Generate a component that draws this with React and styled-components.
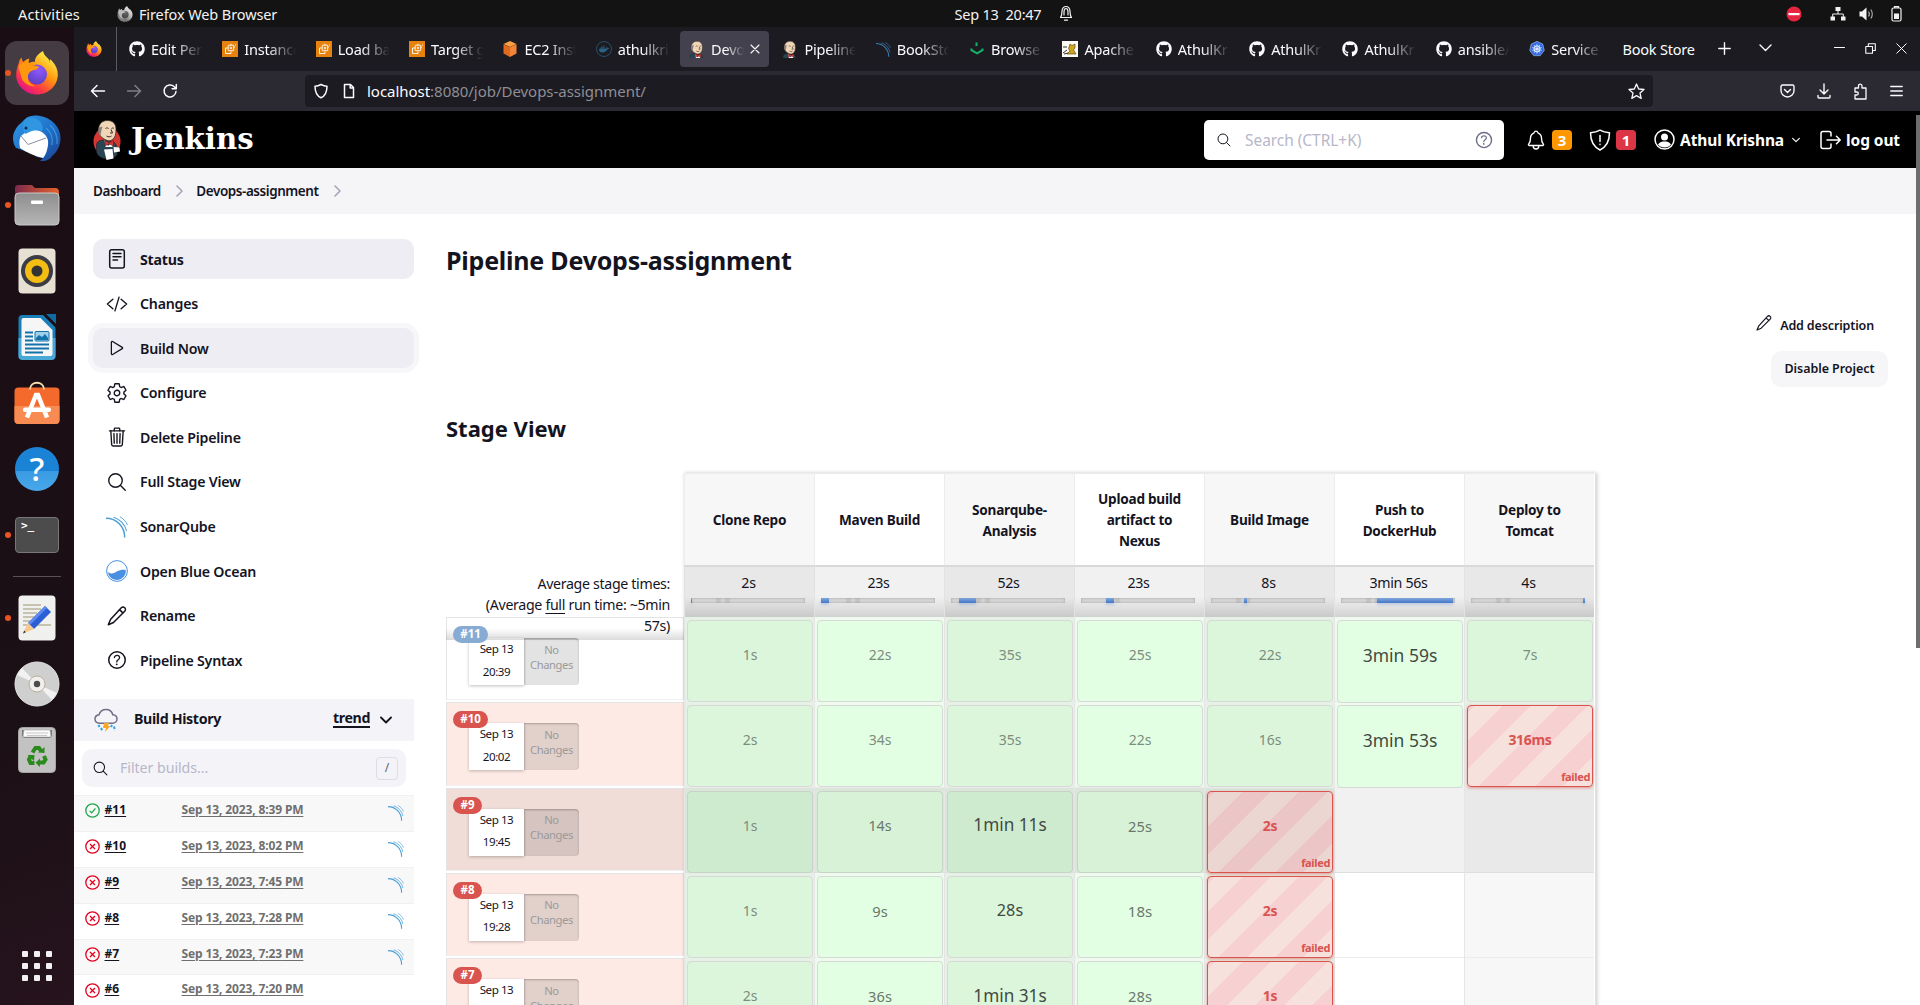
import React from "react";
import styled, { createGlobalStyle, css } from "styled-components";
import { FaGithub, FaDocker } from "react-icons/fa";
import {
  IoCodeSlashOutline, IoPlayOutline, IoSettingsOutline, IoTrashOutline, IoSearchOutline,
  IoHelpCircleOutline, IoNotificationsOutline, IoChevronDown,
} from "react-icons/io5";

const Global = createGlobalStyle`
  * { box-sizing: border-box; }
  body { margin: 0; background: #fff; font-family: "Noto Sans", "Open Sans", sans-serif; overflow: hidden; }
  svg { display: block; flex: none; }
`;

/* ---------- shell ---------- */
const Screen = styled.div`display: flex; flex-direction: column; width: 1920px; height: 1005px; overflow: hidden;`;
const TopBar = styled.header`
  flex: none; height: 27px; background: #131313; color: #f2f2f2; display: grid;
  grid-template-columns: 1fr auto 1fr; align-items: center; font-size: 14.5px; line-height: 26px; white-space: pre;
`;
const TopLeft = styled.div`display: flex; align-items: center; padding-left: 18px; letter-spacing: 0.15px;`;
const AppName = styled.span`display: flex; align-items: center; gap: 6px; margin-left: 37px; letter-spacing: -0.1px;`;
const Clock = styled.div`display: flex; align-items: center; gap: 18px; letter-spacing: -0.25px; padding-left: 108px;`;
const TopRight = styled.div`display: flex; align-items: center; justify-content: flex-end; padding-right: 18px;`;
const NetIcon = styled.svg`margin-left: 28px;`;
const VolIcon = styled.svg`margin-left: 13px;`;
const BatIcon = styled.svg`margin-left: 16px;`;
const Desktop = styled.div`flex: 1; min-height: 0; display: flex;`;

const Dock = styled.nav`
  flex: none; width: 74px; background: linear-gradient(160deg, #1a0d14 0%, #1b1015 70%, #26131d 100%);
  display: flex; flex-direction: column; align-items: center; padding-top: 13px;
`;
const DockItem = styled.div`
  position: relative; width: 74px; height: 66px; display: flex; align-items: center; justify-content: center; flex: none;
`;
const DockTile = styled.div`
  width: 64px; height: 64px; border-radius: 12px; display: flex; align-items: center; justify-content: center;
  background: ${(p) => (p.$active ? "#453b42" : "transparent")};
`;
const DockDot = styled.i`position: absolute; left: 5px; top: 30px; width: 6px; height: 6px; border-radius: 50%; background: #e95420;`;
const DockLine = styled.hr`width: 48px; height: 1px; border: 0; margin: 8px 0; background: #5a5156; flex: none;`;
const AppsGrid = styled.div`
  margin-top: auto; margin-bottom: 24px; display: grid; grid-template-columns: repeat(3, 6px); gap: 6px;
  i { width: 6px; height: 6px; border-radius: 1px; background: #f2f0f1; }
`;

/* ---------- browser ---------- */
const Browser = styled.main`flex: 1; min-width: 0; display: flex; flex-direction: column; background: #fff;`;
const TabStrip = styled.div`flex: none; height: 44px; background: #1c1b22; display: flex; color: #fbfbfe;`;
const PinnedTab = styled.div`width: 43px; border-right: 1px solid #5b5a61; display: flex; align-items: center; justify-content: center; padding-right: 3px;`;
const Tabs = styled.div`display: flex; padding-left: 1px;`;
const Tab = styled.div`
  flex: none; width: ${(p) => (p.$wide ? 95 : 89.35)}px; height: 36px; margin: 4px 2px; padding-left: ${(p) => (p.$wide ? 9 : 9)}px;
  display: flex; align-items: center; gap: 6px; border-radius: 4px; background: ${(p) => (p.$active ? "#42414d" : "transparent")};
`;
const TabTitle = styled.span`
  flex: none; width: ${(p) => p.$w}px; overflow: hidden; white-space: nowrap; font-size: 14.5px; line-height: 22px; letter-spacing: -0.2px;
  ${(p) => !p.$full && css`mask-image: linear-gradient(90deg, #000 45%, transparent 100%);`}
`;
const TabTools = styled.div`flex: 1; display: flex; align-items: center; justify-content: flex-end; gap: 28px; padding-right: 13px; height: 42px;`;
const WindowTools = styled.div`display: flex; align-items: center; gap: 20px; margin-left: 34px;`;
const NavBar = styled.div`flex: none; height: 40px; background: #2b2a33; display: flex; align-items: center; color: #fbfbfe;`;
const NavButtons = styled.div`width: 231px; display: flex; gap: 20px; padding-left: 16px;`;
const UrlField = styled.div`
  width: 1348px; height: 32px; border-radius: 4px; background: #1c1b22; display: flex; align-items: center; padding: 0 8px;
`;
const UrlText = styled.span`font-size: 15px; color: #8f8e95; margin-left: 12.5px; flex: 1; line-height: 20px; letter-spacing: -0.03px; b { color: #fbfbfe; font-weight: 400; }`;
const NavTools = styled.div`flex: 1; display: flex; align-items: center; justify-content: flex-end; gap: 22px; padding-right: 17px;`;
const UrlIcons = styled.div`display: flex; gap: 13.5px; align-items: center;`;

/* ---------- Jenkins header ---------- */
const Page = styled.div`flex: 1; min-height: 0; position: relative; display: flex; flex-direction: column; color: #14141f;`;
const Scrollbar = styled.div`position: absolute; right: 0; top: 4px; width: 4px; height: 533px; background: #6d6d6e; z-index: 3;`;
const JenkinsBar = styled.div`flex: none; height: 57px; background: #000; display: flex; align-items: center; color: #fff; padding: 0 20px 0 19px;`;
const Brand = styled.div`display: flex; align-items: center; gap: 10px; flex: 1;`;
const BrandName = styled.span`font: 700 29.2px/40px "DejaVu Serif", serif; padding-bottom: 2px;`;
const SearchBox = styled.div`
  width: 300px; height: 40px; border-radius: 5px; background: #fff; color: #14141f; display: flex; align-items: center; padding: 0 9px 0 12px;
`;
const Placeholder = styled.span`flex: 1; color: #b7b7c9; font-size: ${(p) => p.$s}px; margin-left: ${(p) => p.$gap}px; letter-spacing: -0.05px; line-height: 20px;`;
const HeaderTools = styled.div`display: flex; align-items: center; margin-left: 21px;`;
const Badge = styled.span`
  width: 20px; height: 20px; margin: 0 ${(p) => p.$after}px 0 5px; border-radius: 4px; background: ${(p) => p.$c}; font-size: 15px; font-weight: 700;
  line-height: 20px; text-align: center;
`;
const HeaderText = styled.span`font-size: 15.5px; font-weight: 700; line-height: 22px; letter-spacing: -0.1px; margin: 0 ${(p) => p.$after || 0}px 0 5px;`;
const LogoutSlot = styled.span`margin-left: 2px;`;
const Crumbs = styled.div`
  flex: none; height: 46px; background: #f5f5f8; display: flex; align-items: center; padding: 0 19px; font-size: 13.5px; font-weight: 600;
  letter-spacing: -0.44px; svg { margin: 0 13.5px 0 15px; }
`;

/* ---------- side panel ---------- */
const Body = styled.div`flex: 1; min-height: 0; display: flex; overflow: hidden;`;
const SidePanel = styled.aside`flex: none; width: 340px; padding-top: 25px;`;
const TaskList = styled.nav`display: flex; flex-direction: column; gap: 4.6px; padding-left: 19px;`;
const Task = styled.a`
  height: 40px; flex: none; border-radius: 10px; padding-left: 12px; display: flex; align-items: center; gap: 12px; font-size: 14.2px;
  font-weight: ${(p) => (p.$on ? 700 : 600)}; letter-spacing: -0.22px;
  background: ${(p) => (p.$on || p.$hover ? "#ededf3" : "transparent")};
  box-shadow: ${(p) => (p.$hover ? "0 0 0 5px #f7f7f9" : "none")};
`;
const TaskIcon = styled.span`width: 23px; display: flex; justify-content: center;`;
const HistoryHead = styled.div`
  height: 42px; margin-top: 18.6px; background: #f3f3f8; display: flex; align-items: center; padding: 0 22px 0 20px; font-size: 14.2px; font-weight: 700;
`;
const HistoryTitle = styled.span`flex: 1; margin-left: 16px; letter-spacing: -0.35px; padding-bottom: 2px;`;
const TrendLink = styled.a`border-bottom: 2px solid #14141f; line-height: 16px; letter-spacing: -0.35px; margin: 0 10px 2px 0;`;
const FilterBox = styled.div`
  margin: 8px; height: 38px; border-radius: 10px; background: #f3f3f8; display: flex; align-items: center; padding: 1px 8px 0 10px;
`;
const Key = styled.kbd`
  width: 22px; height: 23px; border: 1px solid #dddde6; border-radius: 4px; font: 400 12px/20px "Noto Sans", sans-serif; text-align: center; color: #5f5f78;
`;
const BuildRow = styled.div`
  height: 35.9px; border-top: 1px solid #f0f0f0; background: ${(p) => (p.$odd ? "#f8f8f8" : "#fff")};
  display: grid; grid-template-columns: 20px 77px 1fr 26px; padding-left: 10.500px; padding-top: 5px; align-items: start;
`;
const StatusMark = styled.span`padding-top: 2.5px;`;
const BuildLink = styled.a`font-size: 12px; font-weight: 700; line-height: 17px; text-decoration: underline; text-underline-offset: 2px; letter-spacing: 0.05px;`;
const DateLink = styled(BuildLink)`color: #6f6f6f; letter-spacing: -0.13px;`;
const SonarSlot = styled.span`padding-top: 4px;`;

/* ---------- content ---------- */
const Content = styled.section`flex: 1; min-width: 0; padding: 30px 32px 0 32px;`;
const PageTitle = styled.h1`margin: 0; font-size: 25px; line-height: 32px; font-weight: 700; letter-spacing: -0.22px;`;
const Actions = styled.div`display: flex; flex-direction: column; align-items: flex-end; gap: 16px; margin-top: 39px; font-size: 12.5px; font-weight: 600;`;
const AddDescription = styled.a`height: 20px; display: flex; align-items: center; gap: 8px; padding-right: 14px; letter-spacing: -0.14px; svg { margin-bottom: 4px; }`;
const DisableButton = styled.button`
  width: 117px; height: 36px; border: 0; border-radius: 10px; background: #f6f6f9; font: inherit; color: inherit; padding: 0 0 1px; letter-spacing: -0.06px;
`;
const SectionTitle = styled.h2`margin: 25px 0 29px; font-size: 22px; line-height: 32px; font-weight: 700;`;

const StageTable = styled.div`display: flex;`;
const RunColumn = styled.div`flex: none; width: 238px;`;
const Legend = styled.div`
  position: relative; z-index: 1; height: 167px; margin-bottom: -23px; padding: 100px 14px 0 0; text-align: right; font-size: 14.2px; line-height: 21px;
  letter-spacing: -0.33px; background: linear-gradient(transparent 155px, rgba(0,0,0,.14) 167px); u { text-underline-offset: 3px; }
`;
const RunCard = styled.div`
  height: 83.25px; margin-bottom: 2px; width: 238px; padding: 8px 6px 0; border: 1px solid #e4e4e6; border-bottom-color: #f0f0f0;
  background: ${(p) => (p.$hover ? "#f0ddd8" : p.$failed ? "#feeae5" : "#fff")};
`;
const RunBadge = styled.span`
  position: relative; z-index: 2; display: block; width: ${(p) => (p.$long ? 35 : 29)}px; height: 17px; border-radius: 9px; font-size: 11.5px; line-height: 16px; font-weight: 700;
  text-align: center; color: #fff; background: ${(p) => (p.$failed ? "#d9534f" : "#87abd3")};
`;
const RunInfo = styled.div`display: flex; margin: -5px 0 0 16px; font-size: 11.6px; text-align: center;`;
const RunDate = styled.div`
  width: 55px; height: 47px; background: #fff; box-shadow: 0 1px 3px rgba(0,0,0,.25); letter-spacing: -0.45px; line-height: 22.6px;
`;
const NoChanges = styled.div`
  width: 55px; height: 47px; padding-top: 3.5px; color: #9a9a9a; background: rgba(0,0,0,.11); line-height: 15px; border-radius: 0 4px 4px 0; font-size: 11.2px;
  letter-spacing: -0.4px; box-shadow: inset 0 1px 2px rgba(0,0,0,.25);
`;
const Stages = styled.div`
  flex: none; width: 912px; display: grid; grid-template-columns: repeat(7, 130px); grid-template-rows: 92px 52px; grid-auto-rows: 85.25px;
  border-right: 1px solid #e0e0e0; box-shadow: 1px 0 4px rgba(0,0,0,.22);
`;
const StageHead = styled.div`
  display: flex; align-items: center; justify-content: center; text-align: center; padding: 0 18px; font-size: 13.6px; line-height: 21px; font-weight: 700;
  letter-spacing: -0.25px; border-left: 1px solid #ececec; border-top: 1px solid #ececec; background: ${(p) => (p.$odd ? "#f7f7f7" : "#fff")};
`;
const StageAvg = styled.div`
  padding: 5px 8px 0 6px; text-align: center; font-size: 14.2px; line-height: 22px; letter-spacing: -0.3px; border-left: 1px solid #e2e2e2; border-top: 2px solid #d9d9d9;
  background: linear-gradient(${(p) => (p.$odd ? "#e8e8e8, #e8e8e8 30px, #c9c9c9" : "#f1f1f1, #f1f1f1 30px, #d2d2d2")});
`;
const Track = styled.div`
  margin-top: 4px; width: 114px; height: 5px; box-shadow: inset 0 0 3px rgba(0,0,0,.25); padding-left: ${(p) => p.$from}px;
  background: linear-gradient(90deg, transparent 24px, #c8c8c8 26px 29px, transparent 31px, transparent 33px, #c8c8c8 35px 38px, transparent 40px), #d8d8d8;
`;
const Fill = styled.div`height: 5px; width: ${(p) => p.$w}px; background: linear-gradient(#7fa6dc, #4576c8); box-shadow: 0 2px 3px rgba(70,118,200,.25);`;
const Cell = styled.div`
  border-left: 1px solid #e6e6e6; border-bottom: 1px solid ${(p) => (p.$hover ? "#dedede" : "#ebebeb")}; padding: 3px 1px 0 2px;
  background: ${(p) => (p.$state === "empty" ? (p.$odd ? "#f7f7f7" : "#fff") : p.$odd ? "#e6f1e5" : "#eefaee")};
  ${(p) => p.$hover && css`background: ${p.$state === "empty" ? (p.$odd ? "#e9e9e9" : "#f1f1f1") : "#dbe6da"};`}
`;
const CellBox = styled.div`
  position: relative; height: ${(p) => (p.$size > 17.3 ? 83 : 82)}px; width: 126px; border-radius: 4px; padding-top: ${(p) => (p.$size > 16 ? 22.500 : 23)}px; text-align: center; line-height: 22px;
  border: 1px solid ${(p) => (p.$failed ? "#d9534f" : p.$hover ? "#c6d3c6" : "#d6d9d6")};
  font-size: ${(p) => p.$size}px; color: ${(p) => (p.$failed ? "#d9534f" : p.$ink)}; font-weight: ${(p) => (p.$failed ? 700 : 400)};
  letter-spacing: ${(p) => (p.$failed ? -0.3 : 0)}px;
  ${(p) => p.$failed
    ? css`
      box-shadow: 0 1px 3px rgba(217,83,79,.6);
      background: ${p.$hover
        ? "repeating-linear-gradient(-45deg, #ecd6d1 0 20px, #ecc5c6 20px 40px)"
        : "repeating-linear-gradient(-45deg, #f6e1dc 0 20px, #f7d0d1 20px 40px)"};`
    : css`
      background: ${p.$hover ? (p.$odd ? "#cfebcf" : "#d7f2d7") : p.$odd ? "#dcf6db" : "#e3ffe3"};`}
`;
const FailedTag = styled.span`position: absolute; right: 2px; bottom: 1px; font-size: 11px; line-height: 16px; letter-spacing: -0.35px;`;

/* ---------- drawings ---------- */
const Firefox = ({ size, grey }) => {
  const k = grey ? "g" : "c";
  const c = grey ? ["#eee", "#bbb", "#777", "#666", "#444"] : ["#fff44f", "#ff980e", "#ff3647", "#9059ff", "#5b3fc0"];
  return (
    <svg width={size} height={size} viewBox="0 0 44 44">
      <defs>
        <linearGradient id={"fx" + k} x1=".85" y1=".1" x2=".25" y2=".95">
          <stop offset="0" stopColor={c[0]} /><stop offset=".42" stopColor={c[1]} /><stop offset=".78" stopColor={c[2]} /><stop offset="1" stopColor={grey ? "#888" : "#e31587"} />
        </linearGradient>
        <radialGradient id={"fy" + k} cx=".6" cy=".25" r=".8"><stop offset="0" stopColor={c[3]} /><stop offset="1" stopColor={c[4]} /></radialGradient>
      </defs>
      <path fill={`url(#fx${k})`} d="M28 0c1 4 2.500 5 5 7.500 1.500 1.500 2 3 2.200 4.500C35 9 34 7 37 10c4 4 6 9 5.800 14C42.500 35 33 43.500 22 43.500S1.200 35 1.200 24c0-4 1-8 2.300-11 .5-3 1.500-5 3-6.500.2 2 1 3.500 2 4.500C10 9 12 8.200 14.500 7.500c-1 2-1 3.500-.5 4.500 2-1 4-1.500 6-1.300C19.500 6 24 2.500 28 0z" />
      <circle cx="22" cy="23.500" r="10" fill={`url(#fy${k})`} />
      <path fill={c[1]} d="M4 14c4-4 9-3 12-1 3 2 6 2 8 2.500-1 3-4 3.500-6.500 4-2.500 1-4 2.500-4.500 5-1 5 3 10 8 10.500-8 1-14-4-15-10-.7-4-3-7-2-11z" />
    </svg>
  );
};
const Thunderbird = () => (
  <svg width="50" height="50" viewBox="0 0 50 50">
    <defs><linearGradient id="tb" x1="0" y1="0" x2="1" y2="1"><stop offset="0" stopColor="#2f9be8" /><stop offset=".55" stopColor="#1f6fc8" /><stop offset="1" stopColor="#1a3f8f" /></linearGradient></defs>
    <path fill="url(#tb)" d="M13 5c4-3.500 10-4 15-3 12 2 20.500 11 20.500 22 0 8-3.500 14-8.500 18-1 3-6 5.500-12 5l3-3c-3 0-6-1-8-2L4 34C2 31 1 28 1 24c0-6 4-12 8-15z" />
    <path fill="#1a0f15" d="M4 34c4 6 11 10 20 10l-1-3z" />
    <path fill="#fff" d="M9 22c6-6 14-8 21-4 4 3 7 7 6 13-1 7-3 11-5 13-9-2-17-6-23-10-1-5-1-9 1-12z" />
    <path fill="none" stroke="#8a929c" strokeWidth="1" d="M9 22l7 8.500L34 24" />
    <path fill="#3096e2" d="M13 6c6-4 13-2 16 3 2.500 3.500 2 6.500.5 8.500-5-2.500-10-1-16 2.500-3-4-3.500-10-.5-14z" />
    <circle cx="14" cy="14" r="1.500" fill="#0b2d55" />
    <path fill="none" stroke="#4fb3f2" strokeWidth="1.200" d="M34 14c5 4 7 10 6 17M38 11c5 5 8 10 7 19" opacity=".6" />
  </svg>
);
const Files = () => (
  <svg width="46" height="42" viewBox="0 0 46 42">
    <defs><linearGradient id="fl"><stop offset="0" stopColor="#7b2a4d" /><stop offset="1" stopColor="#e8632a" /></linearGradient>
      <linearGradient id="fm" x2="0" y2="1"><stop offset="0" stopColor="#8e8e8e" /><stop offset="1" stopColor="#b5b5b5" /></linearGradient></defs>
    <path fill="url(#fl)" d="M1 4a3 3 0 013-3h14l3 3h20a4 4 0 014 4v12H1z" />
    <rect x="1" y="9" width="44" height="32" rx="4" fill="url(#fm)" stroke="#c9c9c9" /><rect x="17" y="16.500" width="12" height="3.500" rx="1" fill="#fff" />
  </svg>
);
const Rhythmbox = () => (
  <svg width="38" height="46" viewBox="0 0 38 46">
    <rect x=".5" y=".5" width="37" height="45" rx="4" fill="#e6e1d3" /><circle cx="19" cy="23" r="16" fill="#3c3c46" /><circle cx="19" cy="23" r="12" fill="#f3bd13" />
    <circle cx="19" cy="23" r="5.500" fill="#333" />
  </svg>
);
const Writer = () => (
  <svg width="38" height="46" viewBox="0 0 38 46">
    <rect x=".5" y="1" width="37" height="44.500" rx="4" fill="#1a7fb8" /><path fill="#48a8d6" d="M.5 24h37v18a4 4 0 01-4 4h-29a4 4 0 01-4-4z" />
    <path fill="#1a0f15" d="M24 0l14 14V0z" /><path fill="#0f6ba3" d="M28 0h10v10z" />
    <path fill="#f6f6f6" d="M3.500 6a2 2 0 012-2h17L34.500 16v24a2 2 0 01-2 2h-27a2 2 0 01-2-2z" />
    <path stroke="#1273ab" strokeWidth="2" d="M7 18.500h8M7 22.500h8M7 26.500h8M7 30.500h24M7 34.500h24M7 38.500h18" /><rect x="17" y="17.500" width="14" height="9.500" rx="1" fill="#9fd0ea" stroke="#1273ab" />
    <path fill="#1273ab" d="M18 26v-2l3-3 3 2 3-3 3 4v2z" />
  </svg>
);
const Software = () => (
  <svg width="46" height="44" viewBox="0 0 46 44">
    <rect x=".5" y="6.500" width="45" height="36.500" rx="4" fill="#f4692c" /><path fill="#f78b52" d="M.5 25h45v14a4 4 0 01-4 4h-37a4 4 0 01-4-4z" />
    <path d="M16 8.500c0-9 14-9 14 0" fill="none" stroke="#f7dcae" strokeWidth="1.800" />
    <path d="M13 36.500l9-22.500h2l9 22.500" fill="none" stroke="#fff" strokeWidth="4.500" /><rect x="9" y="26.500" width="28" height="4.500" rx="2" fill="#fff" />
  </svg>
);
const HelpDrawing = styled.div`
  width: 44px; height: 44px; border-radius: 50%; background: linear-gradient(#1b83d6 55%, #3a9be2 55%, #49a8ea); color: #fff; text-align: center; font-size: 33px; line-height: 43px; font-weight: 500;
`;
const TerminalDrawing = styled.div`
  width: 44px; height: 36px; border-radius: 4px; background: #4c4c4c; border: 1px solid #777; color: #fff; font: 700 11px/14px "DejaVu Sans Mono", monospace; padding: 1px 0 0 5px;
`;
const Editor = () => (
  <svg width="38" height="46" viewBox="0 0 38 46">
    <rect x=".5" y=".5" width="37" height="45" rx="4" fill="#f0f0ee" /><path stroke="#c8c3b0" strokeWidth="2" d="M5 10h18M5 14h18M5 18h14M5 22h12M5 26h10M5 30h28" />
    <path fill="#2c5fd6" d="M27 11l6 6-17 17-6-6z" /><path fill="#5c8af0" d="M27 11l2 2-17 17-2-2z" /><path fill="#f7c98c" d="M10 28l6 6-11 4.500z" /><path fill="#333" d="M6.200 35.500l1.700 1.800L5 38.500z" />
  </svg>
);
const Disk = () => (
  <svg width="46" height="46" viewBox="0 0 46 46">
    <circle cx="23" cy="23" r="22" fill="#cfcfcf" stroke="#e6e6e6" /><path fill="#f2f2f2" d="M23 23L3 14l5-7zM23 23l20 9-5 7z" /><circle cx="23" cy="23" r="8" fill="#f0efec" stroke="#b9b09c" /><circle cx="23" cy="23" r="3.200" fill="#4c4c4c" />
  </svg>
);
const Trash = () => (
  <svg width="38" height="46" viewBox="0 0 38 46">
    <rect x=".5" y=".5" width="37" height="45" rx="4" fill="#c2c2c2" stroke="#a5a5a5" /><path fill="#777" d="M4 3h30v5a3 3 0 01-3 3H7a3 3 0 01-3-3z" /><path fill="#fafafa" stroke="#aaa" strokeWidth=".6" d="M6 3h26l1 7H5z" />
    <path stroke="#bbb" fill="none" strokeWidth=".8" d="M8 6h22M9 8.500h20" />
    <g fill="none" stroke="#2a8a1e" strokeWidth="4"><path d="M14.500 25.500l3-4.500h3.500l2 3" /><path d="M26 29l1.500 3.500-2 3h-4" /><path d="M16.500 36h-4l-1.500-3.500 1.500-3" /></g>
    <path fill="#2a8a1e" d="M20 25.500l6.500.5V20zM22 31.500v8.500l-4.500-4.300zM9.500 28h7l-.5 6z" />
  </svg>
);
const JenkinsHead = ({ w, h, crop }) => (
  <svg width={w} height={h} viewBox={crop ? "3 0 23 27" : "0 0 28 40"}>
    {!crop && <ellipse cx="14" cy="21.500" rx="13.500" ry="14.500" fill="#d33833" />}
    <path fill="#2b4454" stroke="#101c24" strokeWidth=".5" d="M3.500 24c1-3 4-4 7-4l9 2c2 0 3.500 2 4 4l1 8c-2 4-6 5-11 5-5-.5-9-3-10-7z" />
    <path fill="#f0d6b7" stroke="#3a2d26" strokeWidth=".8" d="M5.500 9C6 3 10 .5 14.500.5c5 0 8.500 3 8.500 8.500 0 5-.5 8-3.500 10.500-2 1.800-6 1.500-9-1C7 17 5.500 13 5.500 9z" />
    <path fill="#8a8078" d="M6 7.500C4.500 11 5.500 15 7.500 16l.8-5 1.200-4.500z" />
    <path fill="none" stroke="#3a2d26" strokeWidth="1" d="M12.500 8.500c.8-.8 2-.8 3 0M18.500 8.500c.7-.7 1.700-.7 2.500 0M18 9.500l1.500 3.500h-2.500M13.500 16c2 1.200 3.500 1 5 0" />
    <path fill="#fff" d="M11.500 20l3.500 6 4.500-4v5h-7z" /><path fill="#d33833" stroke="#6b1512" strokeWidth=".5" d="M12 20.500l4 2.200 4.500-2.200v5.500l-4.500-2.200-4 2.200z" />
    <path fill="#fff" d="M11 29.500l8.500-.5 1 9.500-7 1.500zM20.500 27l6 .5.5 4-6 1z" />
  </svg>
);
const Ec2 = () => (
  <svg width="16" height="16" viewBox="0 0 16 16"><rect width="16" height="16" fill="#e8820e" /><g fill="none" stroke="#fff" strokeWidth=".9"><rect x="6.200" y="4.200" width="5.500" height="5.500" rx=".6" /><path d="M6 7H3.500v5.500H9V10.500M9 4V2.800M11.700 6h1.300M13.500 3.500v1" /><circle cx="9" cy="7" r=".8" /></g></svg>
);
const Cube = () => (
  <svg width="16" height="16" viewBox="0 0 16 16"><path fill="#f9a040" d="M8 0l6.500 3L8 6 1.500 3z" /><path fill="#e06a22" d="M1.500 3.300L8 6.200V16l-6.500-3.400z" /><path fill="#f58536" d="M14.500 3.300L8 6.200V16l6.500-3.400z" /></svg>
);
const DockerTab = styled.span`
  width: 16px; height: 16px; flex: none; border-radius: 50%; border: 1px solid #24506a; color: #2a6485; display: flex; align-items: center; justify-content: center;
`;
const Kube = () => (
  <svg width="16" height="16" viewBox="0 0 16 16">
    <path fill="#326ce5" stroke="#fff" strokeWidth=".4" d="M8 .3l5.800 2.800 1.500 6.400-4.100 5.200H4.800L.7 9.500l1.500-6.400z" />
    <g fill="none" stroke="#fff" strokeWidth=".9"><circle cx="8" cy="7.900" r="3.100" /><path d="M8 2.800v10M3.200 6.500l9.500 3M3.200 9.500l9.500-3M5.200 11.800L10.900 4M10.900 11.800L5.200 4" strokeWidth=".6" /></g>
  </svg>
);
const Sonar = ({ size, color = "#4b9fd5" }) => (
  <svg width={size} height={size} viewBox="0 0 22 22" fill="none" stroke={color}>
    <path strokeWidth="1.500" d="M0 2.200c10.500 0 18.700 8.500 18.700 19.300" /><path strokeWidth="1.100" d="M7.500 1.200c6 1.600 11.500 7 13 13.800" /><path strokeWidth=".9" d="M14 .8c3 1.600 6 4.800 7.500 8.200" />
  </svg>
);
const NexusMark = () => (
  <svg width="16" height="16" viewBox="0 0 16 16" fill="none" stroke="#15b36b" strokeWidth="2"><path d="M2.500 7.500v1.700L8 12.300l5.500-3.100V7.500M7.500 1.500v3.500" /></svg>
);
const TomcatMark = () => (
  <svg width="16" height="16" viewBox="0 0 16 16"><rect width="16" height="16" fill="#fdfdf5" /><path fill="#d2a41e" stroke="#4b3a14" strokeWidth=".6" d="M8 3l2 1.500L13 3v4l-1.500 2 2.500 4H5L8 10 6.500 7.500z" /><path stroke="#333" d="M1 12l4-3M1 6h4M2 13l4-1" /></svg>
);
const StatusIcon = () => (
  <svg width="22" height="22" viewBox="0 0 22 22" fill="none" stroke="#14141f" strokeWidth="1.500" strokeLinecap="round"><rect x="3.700" y="1.700" width="14.600" height="18.300" rx="2" /><path d="M7 5.500h8M7 8.700h8M7 12h4.500" /></svg>
);
const Pencil = ({ size, sw = 1.5 }) => (
  <svg width={size} height={size} viewBox="0 0 20 20" fill="none" stroke="#14141f" strokeWidth={sw} strokeLinejoin="round" strokeLinecap="round">
    <path d="M14.300 1.800c1-1 2.400-1 3.400-.1 1 1 1 2.500 0 3.500L6.500 16.500 1.300 18.800l2.200-5.300zM12.500 3.600l3.600 3.500" />
  </svg>
);
const BlueOcean = () => (
  <svg width="22" height="22" viewBox="0 0 22 22"><circle cx="11" cy="11" r="10.400" fill="#fff" stroke="#4a90e2" strokeWidth="1" /><path fill="#4a90e2" d="M2 12c3 2.500 6 1.500 9-.7 3-1.700 6-2 8.800-1.300.6 5.500-3.800 10-8.800 10S2 16 2 12z" /></svg>
);
const Storm = () => (
  <svg width="24" height="24" viewBox="0 0 24 24" fill="none">
    <path stroke="#6f6f86" strokeWidth="1.500" d="M5.500 15.200C2.500 15 1 13 1 11s1.500-3.800 4-4.200C6 3.500 8.800 1.500 12 1.500s6 2 6.800 5.300c2.700.2 4.200 2 4.200 4.200 0 2.500-2 4.200-4.500 4.200z" />
    <path fill="#f9a825" d="M10 15h5l-1 3h2.500L11 24l1-4H9z" /><path stroke="#29a3e8" strokeWidth="2" strokeDasharray="2.500 1.500" d="M4.500 17l1 2M7 20l1.500 3M18 17l-1 2M20 18.500l1 4" />
  </svg>
);
const Good = () => (<svg width="15" height="15" viewBox="0 0 15 15" fill="none" stroke="#1ea64b" strokeWidth="1.300"><circle cx="7.500" cy="7.500" r="6.700" /><path d="M4.700 7.900l2 2 3.700-4.500" /></svg>);
const Bad = () => (<svg width="15" height="15" viewBox="0 0 15 15" fill="none" stroke="#e6001f" strokeWidth="1.300"><circle cx="7.500" cy="7.500" r="6.700" /><path d="M5 5l5 5M10 5l-5 5" /></svg>);
const Line = ({ w = 16, h = 16, d, sw = 1.5, ...r }) => (
  <svg width={w} height={h} viewBox={`0 0 ${w} ${h}`} fill="none" stroke="currentColor" strokeWidth={sw} strokeLinecap="round" strokeLinejoin="round" {...r}><path d={d} /></svg>
);
const Person = () => (
  <svg width="21" height="21" viewBox="0 0 21 21"><circle cx="10.500" cy="10.500" r="9.500" fill="none" stroke="#fff" strokeWidth="1.500" /><circle cx="10.500" cy="8" r="3.500" fill="#fff" /><path fill="#fff" d="M4 15.500c1.500-2.500 4-3 6.500-3s5 .5 6.500 3c-1.500 2-4 3-6.500 3s-5-1-6.500-3z" /></svg>
);
const Shield = () => (
  <svg width="22" height="22" viewBox="0 0 22 22" fill="none" stroke="#fff" strokeWidth="1.500" strokeLinejoin="round"><path d="M11 1.200c3 1.800 6 2.400 9.500 2.600C20.500 12 18 17.500 11 21 4 17.500 1.500 12 1.500 3.800 5 3.600 8 3 11 1.200z" /><path strokeLinecap="round" d="M11 6.500v6M11 15.300v.3" /></svg>
);
const ShieldUrl = () => <Line d="M8 1.500c2 1.200 4 1.700 6 1.700 0 6-1.500 9.500-6 11.600C3.500 12.700 2 9.200 2 3.200c2 0 4-.5 6-1.700z" />;

/* ---------- data ---------- */
const tabs = [
  ["Edit Per", <FaGithub size={16} />], ["Instance", <Ec2 />], ["Load ba", <Ec2 />], ["Target g", <Ec2 />], ["EC2 Inst", <Cube />],
  ["athulkri", <DockerTab><FaDocker size={10} /></DockerTab>], ["Devop", <JenkinsHead w={16} h={17} crop />, true], ["Pipeline", <JenkinsHead w={16} h={17} crop />],
  ["BookSto", <Sonar size={15} color="#3a7fae" />], ["Browse", <NexusMark />], ["Apache", <TomcatMark />], ["AthulKr", <FaGithub size={16} />],
  ["AthulKr", <FaGithub size={16} />], ["AthulKr", <FaGithub size={16} />], ["ansible/", <FaGithub size={16} />], ["Service", <Kube />],
];
const dock = [
  [<Firefox size={44} />, true, true], [<Thunderbird />], [<Files />, false, true], [<Rhythmbox />], [<Writer />], [<Software />],
  [<HelpDrawing>?</HelpDrawing>], [<TerminalDrawing>&gt;_</TerminalDrawing>, false, true],
];
const dockLower = [[<Editor />, false, true], [<Disk />], [<Trash />]];
const tasks = [
  ["Status", <StatusIcon />, "on"], ["Changes", <IoCodeSlashOutline size={22} />], ["Build Now", <IoPlayOutline size={20} />, "hover"], ["Configure", <IoSettingsOutline size={22} />],
  ["Delete Pipeline", <IoTrashOutline size={22} />], ["Full Stage View", <IoSearchOutline size={22} />], ["SonarQube", <Sonar size={22} />], ["Open Blue Ocean", <BlueOcean />],
  ["Rename", <Pencil size={20} />], ["Pipeline Syntax", <IoHelpCircleOutline size={24} />],
];
const builds = [["#11", "8:39", 1], ["#10", "8:02", 1], ["#9", "7:45", 1], ["#8", "7:28", 1], ["#7", "7:23", 1], ["#6", "7:20", 0]];
const stages = [
  ["Clone Repo", "2s", 0, 1], ["Maven Build", "23s", 0, 8], ["Sonarqube-Analysis", "52s", 8, 17], ["Upload build artifact to Nexus", "23s", 25, 8],
  ["Build Image", "8s", 33, 3], ["Push to DockerHub", "3min 56s", 36, 76], ["Deploy to Tomcat", "4s", 112, 2],
];
const grey = "#7d8c7f", mid = "#6a776c", dark = "#3f4a41";
const runs = [
  { n: "#11", t: "20:39", c: [["1s"], ["22s"], ["35s"], ["25s"], ["22s"], ["3min 59s", 17.5, dark], ["7s"]] },
  { n: "#10", t: "20:02", failed: true, c: [["2s"], ["34s"], ["35s"], ["22s"], ["16s"], ["3min 53s", 17.5, dark], ["316ms", 14, "fail"]] },
  { n: "#9", t: "19:45", failed: true, hover: true, c: [["1s"], ["14s", 14.3, mid], ["1min 11s", 17.2, dark], ["25s", 14.7, mid], ["2s", 14, "fail"], null, null] },
  { n: "#8", t: "19:28", failed: true, c: [["1s"], ["9s", 14.7, mid], ["28s", 16.2, dark], ["18s", 15, mid], ["2s", 14, "fail"], null, null] },
  { n: "#7", t: "19:23", failed: true, c: [["2s"], ["36s", 14.7, mid], ["1min 31s", 17.2, dark], ["28s", 14.7, mid], ["1s", 14, "fail"], null, null] },
];

const DockEntry = ({ item: [icon, active, dot] }) => (
  <DockItem>{dot && <DockDot />}<DockTile $active={active}>{icon}</DockTile></DockItem>
);

export default function App() {
  return (
    <Screen>
      <Global />
      <TopBar>
        <TopLeft>Activities<AppName><Firefox size={16} grey />Firefox Web Browser</AppName></TopLeft>
        <Clock>
          {"Sep 13  20:47"}
          <Line w={14} h={17} sw={1.2} d="M1.500 12.500c1.500-1.500 1.300-4 1.500-6.500.3-2.500 1.800-4.500 4-4.500s3.700 2 4 4.500c.2 2.500 0 5 1.500 6.500zM5.500 15.200h3M5 10V7c0-2 .8-3.500 2-3.500S9 5 9 7v3" />
        </Clock>
        <TopRight>
          <svg width="16" height="16" viewBox="0 0 16 16"><circle cx="8" cy="8" r="7.500" fill="#e5243f" /><rect x="2.500" y="7" width="11" height="2.200" fill="#fff" /></svg>
          <NetIcon width="16" height="14" viewBox="0 0 16 14" fill="#f2f2f2"><path d="M5.500 0h5v4h-5zM.5 9.500h4.500v4H.5zM11 9.500h4.500v4H11z" /><path fill="none" stroke="#f2f2f2" d="M8 4v3M2.700 10V7h10.600v3" /></NetIcon>
          <VolIcon width="16" height="14" viewBox="0 0 16 14"><path fill="#f2f2f2" d="M.5 4.500H3L7.500.5v13L3 9.500H.5z" /><path fill="none" stroke="#aaa" strokeWidth="1.200" d="M9.500 4.500c1 1.500 1 3.500 0 5M11.800 2.500c2 2.500 2 6.500 0 9" /></VolIcon>
          <BatIcon width="11" height="16" viewBox="0 0 11 16"><path fill="none" stroke="#f2f2f2" strokeWidth="1.200" d="M3.500 2V.7h4V2M2.500 2h6c.8 0 1.500.7 1.500 1.500v10c0 .8-.7 1.500-1.500 1.500h-6C1.700 15 1 14.300 1 13.500v-10C1 2.700 1.700 2 2.500 2z" /><rect x="3" y="7.500" width="5" height="5.500" fill="#f2f2f2" /></BatIcon>
        </TopRight>
      </TopBar>

      <Desktop>
        <Dock>
          {dock.map((d, i) => <DockEntry key={i} item={d} />)}
          <DockLine />
          {dockLower.map((d, i) => <DockEntry key={i} item={d} />)}
          <AppsGrid>{Array.from({ length: 9 }, (_, i) => <i key={i} />)}</AppsGrid>
        </Dock>

        <Browser>
          <TabStrip>
            <PinnedTab><Firefox size={16} /></PinnedTab>
            <Tabs>
              {tabs.map(([title, icon, active], i) => (
                <Tab key={i} $active={active}>
                  {icon}
                  <TabTitle $w={active ? 33 : 52}>{title}</TabTitle>
                  {active && <Line w={10} h={10} sw={1.1} d="M1 1l8 8M9 1l-8 8" />}
                </Tab>
              ))}
              <Tab $wide><TabTitle $full $w={80}>Book Store</TabTitle></Tab>
            </Tabs>
            <TabTools>
              <Line w={13} h={13} sw={1.4} d="M6.500 .8v11.400M.8 6.500h11.400" />
              <Line w={13} h={8} sw={1.4} d="M1 1l5.500 5.500L12 1" />
              <WindowTools>
                <Line w={11} h={10} sw={1.1} d="M.5 4.500h10" />
                <Line w={11} h={11} sw={1.1} d="M.8 3.500h6.700v6.700H.8zM3.300 3.200V.8h7v6.700H8" />
                <Line w={11} h={11} sw={1} d="M.8 .8l9.400 9.400M10.200 .8L.8 10.200" />
              </WindowTools>
            </TabTools>
          </TabStrip>
          <NavBar>
            <NavButtons>
              <Line d="M14.500 8H1.500M7 2.500L1.500 8 7 13.500" />
              <Line opacity=".4" d="M1.500 8h13M9 2.500L14.500 8 9 13.500" />
              <Line d="M14 8.500a6 6 0 11-1.800-4.800L14 5.500M14.300 1.500v4.200h-4.200" />
            </NavButtons>
            <UrlField>
              <UrlIcons><ShieldUrl /><Line w={12} h={16} sw={1.5} d="M1.500 1.500h6l3 3v10h-9zM7.200 1.700v3.200h3.200" /></UrlIcons>
              <UrlText><b>localhost</b>:8080/job/Devops-assignment/</UrlText>
              <Line w={17} h={17} sw={1.3} d="M8.500 1l2.200 5 5.300.5-4 3.600 1.200 5.300-4.700-2.800-4.700 2.800L5 10.100 1 6.500 6.300 6z" />
            </UrlField>
            <NavTools>
              <Line w={15} h={14} sw={1.4} d="M2.500 1h10c.8 0 1.500.7 1.500 1.500V6.500a6.500 6.500 0 01-13 0v-4C1 1.700 1.700 1 2.500 1zM4.500 5.500l3 3 3-3" />
              <Line w={14} h={16} sw={1.4} d="M7 1v9.500M3 7l4 4 4-4M1 12.500V14c0 .6.400 1 1 1h10c.6 0 1-.4 1-1v-1.500" />
              <Line w={15} h={17} sw={1.3} d="M5.500 5V3c0-2.500 3.500-2.500 3.500 0v2h4v11H2v-4h1.800c2 0 2-3 0-3H2V5z" />
              <Line w={13} h={12} sw={1.4} d="M.8 1.500h11.400M.8 6h11.400M.8 10.500h11.400" />
            </NavTools>
          </NavBar>

          <Page>
            <Scrollbar />
            <JenkinsBar>
              <Brand><JenkinsHead w={28} h={40} /><BrandName>Jenkins</BrandName></Brand>
              <SearchBox>
                <IoSearchOutline size={16} /><Placeholder $s={15.5} $gap={13}>Search (CTRL+K)</Placeholder><IoHelpCircleOutline size={22} color="#6c6c8a" />
              </SearchBox>
              <HeaderTools>
                <IoNotificationsOutline size={22} /><Badge $c="#ff9800" $after={17}>3</Badge>
                <Shield /><Badge $c="#dc3545" $after={18}>1</Badge>
                <Person /><HeaderText $after={6}>Athul Krishna</HeaderText><IoChevronDown size={12} />
                <LogoutSlot><Line w={37} h={20} sw={1.5} d="M27 6V3.500c0-1-.7-2-2-2h-6c-1.200 0-2 .8-2 2v13c0 1.200.8 2 2 2h6c1.300 0 2-1 2-2V14M23 10h13M32.500 6.200l3.700 3.800-3.700 3.800" /></LogoutSlot>
                <HeaderText>log out</HeaderText>
              </HeaderTools>
            </JenkinsBar>
            <Crumbs>
              Dashboard<Line w={7} h={12} sw={1.6} stroke="#a6a6b8" d="M1 1l5 5-5 5" />
              Devops-assignment<Line w={7} h={12} sw={1.6} stroke="#a6a6b8" d="M1 1l5 5-5 5" />
            </Crumbs>

            <Body>
              <SidePanel>
                <TaskList>
                  {tasks.map(([label, icon, state]) => (
                    <Task key={label} $on={state === "on"} $hover={state === "hover"}><TaskIcon>{icon}</TaskIcon>{label}</Task>
                  ))}
                </TaskList>
                <HistoryHead>
                  <Storm /><HistoryTitle>Build History</HistoryTitle><TrendLink>trend</TrendLink><Line w={12} h={8} sw={1.8} d="M1 1.500l5 5 5-5" />
                </HistoryHead>
                <FilterBox>
                  <IoSearchOutline size={17} /><Placeholder $s={14.2} $gap={11}>Filter builds...</Placeholder><Key>/</Key>
                </FilterBox>
                {builds.map(([n, t, sonar], i) => (
                  <BuildRow key={n} $odd={i % 2 === 0}>
                    <StatusMark>{i === 0 ? <Good /> : <Bad />}</StatusMark>
                    <BuildLink>{n}</BuildLink>
                    <DateLink>Sep 13, 2023, {t} PM</DateLink>
                    <SonarSlot>{sonar ? <Sonar size={16} /> : null}</SonarSlot>
                  </BuildRow>
                ))}
              </SidePanel>

              <Content>
                <PageTitle>Pipeline Devops-assignment</PageTitle>
                <Actions>
                  <AddDescription><Pencil size={16} />Add description</AddDescription>
                  <DisableButton>Disable Project</DisableButton>
                </Actions>
                <SectionTitle>Stage View</SectionTitle>
                <StageTable>
                  <RunColumn>
                    <Legend>Average stage times:<br />(Average <u>full</u> run time: ~5min<br />57s)</Legend>
                    {runs.map((r) => (
                      <RunCard key={r.n} $failed={r.failed} $hover={r.hover}>
                        <RunBadge $failed={r.failed} $long={r.n.length > 2}>{r.n}</RunBadge>
                        <RunInfo><RunDate>Sep 13<br />{r.t}</RunDate><NoChanges>No<br />Changes</NoChanges></RunInfo>
                      </RunCard>
                    ))}
                  </RunColumn>
                  <Stages>
                    {stages.map(([name], i) => <StageHead key={name} $odd={i % 2 === 0}>{name}</StageHead>)}
                    {stages.map(([name, avg, from, w], i) => (
                      <StageAvg key={name} $odd={i % 2 === 0}>{avg}<Track $from={from}><Fill $w={w} /></Track></StageAvg>
                    ))}
                    {runs.map((r) => r.c.map((c, i) => {
                      const odd = i % 2 === 0;
                      if (!c) return <Cell key={r.n + i} $state="empty" $odd={odd} $hover={r.hover} />;
                      const failed = c[2] === "fail";
                      return (
                        <Cell key={r.n + i} $state="done" $odd={odd} $hover={r.hover}>
                          <CellBox $failed={failed} $odd={odd} $hover={r.hover} $size={c[1] || 14} $ink={c[2] || grey}>
                            {c[0]}{failed && <FailedTag>failed</FailedTag>}
                          </CellBox>
                        </Cell>
                      );
                    }))}
                  </Stages>
                </StageTable>
              </Content>
            </Body>
          </Page>
        </Browser>
      </Desktop>
    </Screen>
  );
}
